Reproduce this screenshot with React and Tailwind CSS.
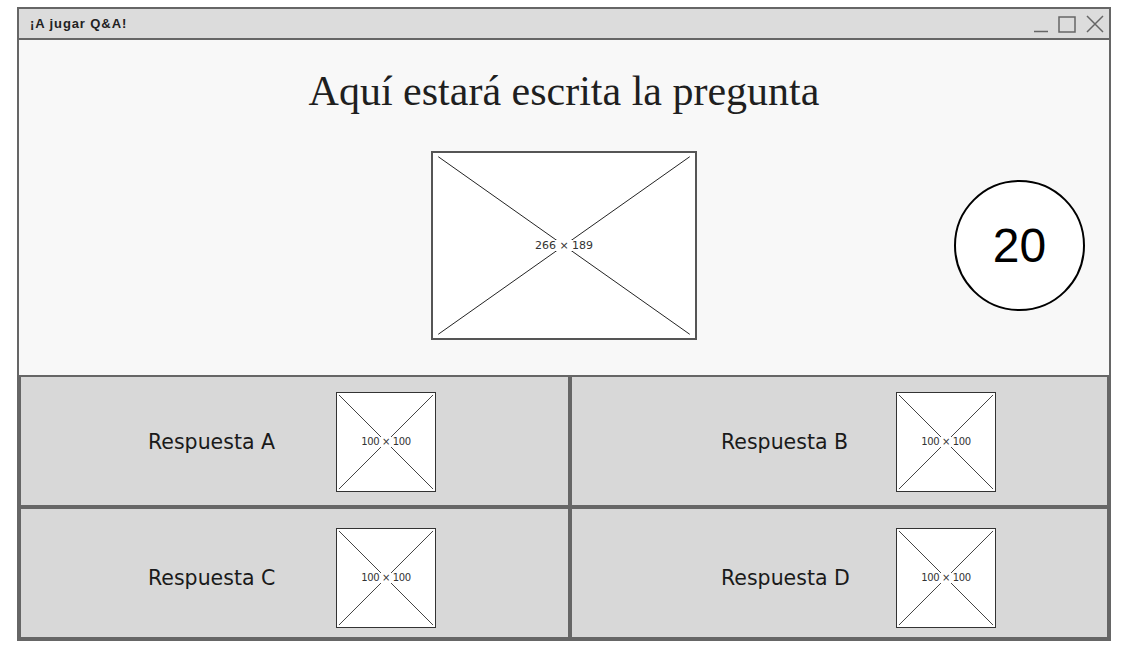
import React from "react";

function Placeholder({ w, h, label, small }) {
  return (
    <div
      className={`relative bg-white shrink-0 ${
        small ? "border border-[#333]" : "border-2 border-[#555]"
      }`}
      style={{ width: w, height: h }}
    >
      <svg className="absolute inset-0 w-full h-full" preserveAspectRatio="none" viewBox="0 0 100 100">
        <line x1="2" y1="2" x2="98" y2="98" stroke={small ? "#444" : "#222"} strokeWidth="1" vectorEffect="non-scaling-stroke" />
        <line x1="98" y1="2" x2="2" y2="98" stroke={small ? "#444" : "#222"} strokeWidth="1" vectorEffect="non-scaling-stroke" />
      </svg>
      <div className="absolute inset-0 flex items-center justify-center">
        <span
          className={`bg-white px-[2px] leading-none text-[#333] font-['DejaVu_Sans',sans-serif] ${
            small ? "text-[10px] tracking-[-0.4px]" : "text-[11px]"
          }`}
        >
          {label}
        </span>
      </div>
    </div>
  );
}

function Answer({ text, pl, tw, pt }) {
  return (
    <div className="border-2 border-[#666] bg-[#d8d8d8] flex items-start" style={{ paddingLeft: pl, paddingTop: pt }}>
      <div className="flex items-center h-[100px]">
        <div
          className="text-[20.5px] text-[#1a1a1a] font-['DejaVu_Sans',sans-serif] leading-none"
          style={{ width: tw }}
        >
          {text}
        </div>
        <Placeholder w={100} h={100} label="100 × 100" small />
      </div>
    </div>
  );
}

export default function App() {
  return (
    <div className="w-[1130px] h-[650px] bg-white pt-[7px] pl-[17px]">
      <div className="w-[1094px] h-[634px] border-2 border-[#666] flex flex-col">
        {/* Title bar */}
        <div className="h-[31px] bg-[#dcdcdc] border-b-2 border-[#666] flex items-center justify-between pl-[11px] pr-[4px]">
          <span className="text-[13px] font-bold text-[#222] font-['Liberation_Sans',sans-serif] tracking-[0.9px] mt-[1px]">
            ¡A jugar Q&amp;A!
          </span>
          <div className="flex items-end gap-[9px] text-[#666]">
            <svg width="16" height="20" viewBox="0 0 16 20">
              <line x1="1" y1="17.5" x2="15" y2="17.5" stroke="#666" strokeWidth="1.5" />
            </svg>
            <svg width="18" height="20" viewBox="0 0 18 20">
              <rect x="1" y="3" width="16" height="15" fill="none" stroke="#666" strokeWidth="1.5" />
            </svg>
            <svg width="20" height="20" viewBox="0 0 20 20">
              <path d="M2 2 L18 18 M18 2 L2 18" stroke="#666" strokeWidth="1.5" fill="none" />
            </svg>
          </div>
        </div>

        {/* Question area */}
        <div className="h-[335px] bg-[#f8f8f8] flex flex-col items-center pt-[30px]">
          <h1 className="text-[42px] leading-none text-[#1f1f1f] font-['Liberation_Serif',serif]">
            Aquí estará escrita la pregunta
          </h1>
          <div className="w-full grid grid-cols-[1fr_266px_1fr] items-center mt-[39px]">
            <div />
            <Placeholder w={266} h={189} label="266 × 189" />
            <div className="flex justify-end pr-[24px]">
              <div className="w-[131px] h-[131px] rounded-full border-2 border-black bg-white flex items-center justify-center">
                <span className="text-[48px] leading-none text-black font-['Liberation_Sans',sans-serif]">20</span>
              </div>
            </div>
          </div>
        </div>

        {/* Answers */}
        <div className="flex-1 grid grid-cols-[551px_1fr] grid-rows-2">
          <Answer text="Respuesta A" pl={127} tw={188} pt={15} />
          <Answer text="Respuesta B" pl={149} tw={175} pt={15} />
          <Answer text="Respuesta C" pl={127} tw={188} pt={19} />
          <Answer text="Respuesta D" pl={149} tw={175} pt={19} />
        </div>
      </div>
    </div>
  );
}
